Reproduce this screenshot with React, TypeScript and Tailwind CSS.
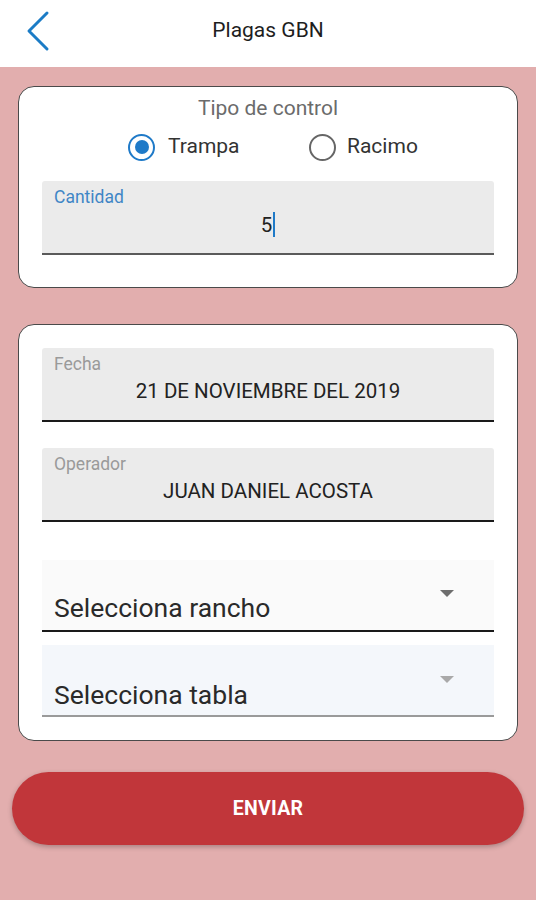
import React from 'react';

const font = { fontFamily: 'Roboto, "Noto Sans", Arial, sans-serif' };

const FilledField: React.FC<{ label: string; value: string; labelClass: string; cursor?: boolean; line: string }> = ({
  label,
  value,
  labelClass,
  cursor,
  line,
}) => (
  <div className={`relative h-[74px] bg-[#ebebeb] rounded-t-[3px] border-b-2 ${line}`}>
    <div className={`absolute left-[12px] top-[5px] text-[17.5px] leading-[22px] ${labelClass}`}>{label}</div>
    <div className="absolute inset-x-0 top-[31px] flex justify-center items-center text-[20.5px] leading-[24px] text-[#222]">
      <span>{value}</span>
      {cursor && <span className="ml-[1px] w-[2px] h-[25px] bg-[#1f7ac8]" />}
    </div>
  </div>
);

const SelectField: React.FC<{ text: string; bg: string; line: string; arrow: string; top: string }> = ({
  text,
  bg,
  line,
  arrow,
  top,
}) => (
  <div className={`relative h-[72px] ${bg} border-b-2 ${line}`}>
    <div className={`absolute left-[12px] ${top} text-[26.5px] leading-[30px] text-[#2a2a2a]`}>{text}</div>
    <svg className={`absolute right-[40px] ${arrow === 'dark' ? 'top-[30px]' : 'top-[31px]'}`} width="14" height="8" viewBox="0 0 14 8">
      <path d="M0 0 L14 0 L7 7 Z" fill={arrow === 'dark' ? '#6d6d6d' : '#a9a9a9'} />
    </svg>
  </div>
);

export default function App() {
  return (
    <div className="w-[536px] h-[900px] bg-[#e2aeae] flex flex-col" style={font}>
      <header className="relative h-[67px] bg-white flex items-center justify-center shrink-0">
        <svg className="absolute left-[24px] top-[10px]" width="28" height="42" viewBox="0 0 28 42">
          <path d="M23 3 L5 21 L23 39" fill="none" stroke="#1b7cc6" strokeWidth="3" strokeLinecap="round" strokeLinejoin="round" />
        </svg>
        <h1 className="text-[21px] text-[#1e1e1e] -mt-[6px]">Plagas GBN</h1>
      </header>

      <main className="flex flex-col px-[18px] pt-[19px]">
        <section className="bg-white rounded-[16px] border border-[#4a4a4a] px-[23px] pt-[8px] pb-[32px]">
          <div className="text-center text-[21px] leading-[26px] text-[#6b6b6b]">Tipo de control</div>
          <div className="flex items-center h-[30px] mt-[11px] mb-[19px] pl-[86px]">
            <div className="flex items-center w-[181px]">
              <span className="w-[27px] h-[27px] rounded-full border-[2.5px] border-[#1f7ac8] flex items-center justify-center">
                <span className="w-[14px] h-[14px] rounded-full bg-[#1f7ac8]" />
              </span>
              <span className="ml-[13px] text-[21px] text-[#333]">Trampa</span>
            </div>
            <div className="flex items-center">
              <span className="w-[27px] h-[27px] rounded-full border-[2.5px] border-[#666]" />
              <span className="ml-[11px] text-[21px] text-[#333]">Racimo</span>
            </div>
          </div>
          <FilledField label="Cantidad" value="5" labelClass="text-[#3f86c6]" cursor line="border-[#5a5a5a]" />
        </section>

        <section className="mt-[36px] bg-white rounded-[16px] border border-[#4a4a4a] px-[23px] pt-[23px] pb-[23px] flex flex-col">
          <FilledField label="Fecha" value="21 DE NOVIEMBRE DEL 2019" labelClass="text-[#9a9a9a]" line="border-[#1a1a1a]" />
          <div className="mt-[26px]">
            <FilledField label="Operador" value="JUAN DANIEL ACOSTA" labelClass="text-[#9a9a9a]" line="border-[#1a1a1a]" />
          </div>
          <div className="mt-[38px]">
            <SelectField text="Selecciona rancho" bg="bg-[#fafafa]" line="border-[#1a1a1a]" arrow="dark" top="top-[33px]" />
          </div>
          <div className="mt-[13px]">
            <SelectField text="Selecciona tabla" bg="bg-[#f4f7fb]" line="border-[#9a9a9a]" arrow="light" top="top-[35px]" />
          </div>
        </section>

        <button className="mt-[31px] -mx-[6px] h-[73px] rounded-full bg-[#c1363a] shadow-[0_2px_5px_rgba(0,0,0,0.25)] text-white text-[19.5px] font-bold tracking-[0.3px]">
          ENVIAR
        </button>
      </main>
    </div>
  );
}
